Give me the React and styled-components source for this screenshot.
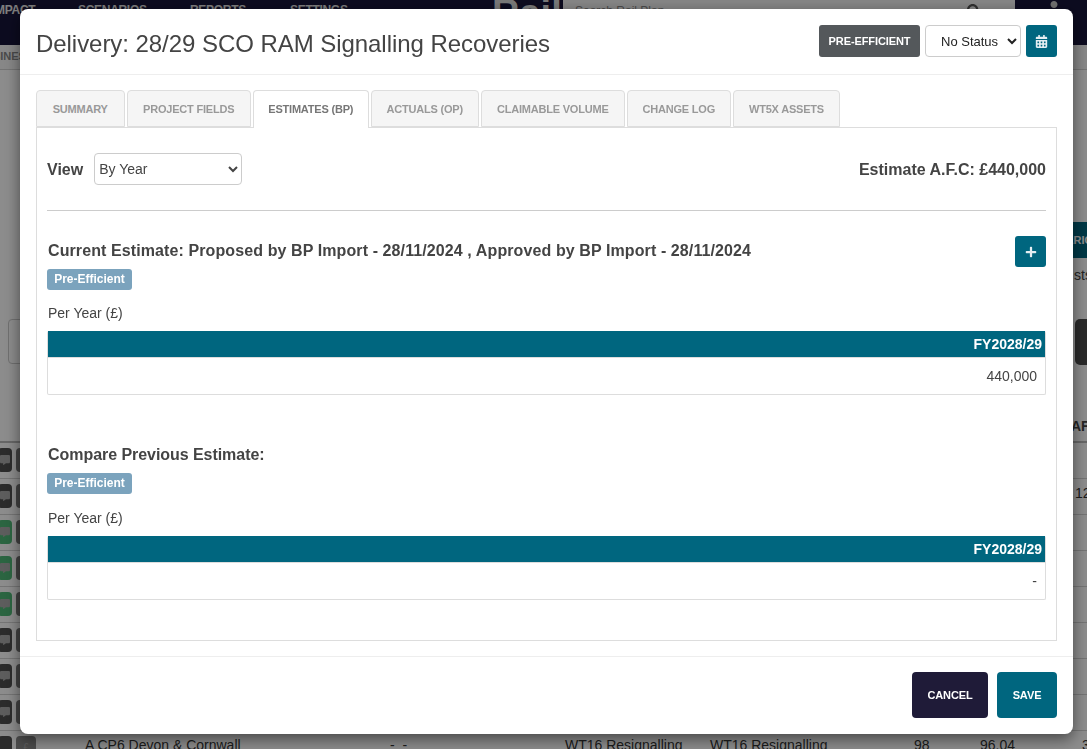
import React from 'react';

import styled, { createGlobalStyle } from 'styled-components';
import { FaCalendarAlt, FaCommentAlt, FaPlus, FaSearch, FaUser } from 'react-icons/fa';

const GlobalStyle = createGlobalStyle`
  html, body {
    margin: 0;
    padding: 0;
    background: #fff;
    font-family: "Liberation Sans", Arial, sans-serif;
    color: #444;
  }
  * { box-sizing: border-box; }
`;

const Page = styled.div`
  width: 1087px;
  height: 749px;
  overflow: hidden;
  background: #fff;
`;

const Nav = styled.div`
  height: 45px;
  background: #17153a;
  display: flex;
  align-items: flex-start;
  overflow: hidden;
`;

const NavLink = styled.span`
  width: ${(p) => p.$width}px;
  flex: none;
  margin-top: 3px;
  font-size: 12px;
  line-height: 14px;
  font-weight: 700;
  letter-spacing: -0.3px;
  color: #e4e4e4;
  white-space: nowrap;
`;

const NavLinks = styled.div`
  display: flex;
  width: 500px;
  flex: none;
  margin-left: -8px;
`;

const Logo = styled.span`
  width: 71px;
  flex: none;
  margin-top: -6px;
  font-size: 38px;
  line-height: 38px;
  font-weight: 700;
  color: #ddd;
  overflow: hidden;
`;

const SearchBar = styled.div`
  width: 452px;
  height: 45px;
  flex: none;
  background: #f4f4f4;
  display: flex;
  align-items: flex-start;
  justify-content: space-between;
  padding: 4px 34px 0 12px;
  font-size: 12px;
  color: #888;
`;

const NavEnd = styled.div`
  flex: 1;
  padding: 1px 0 0 32px;
  color: #ccc;
`;

const SubNav = styled.div`
  height: 25px;
  border-bottom: 1px solid #d2d2d2;
  background: #f6f6f6;
  padding-top: 4px;
  margin-left: -23px;
  font-size: 11px;
  line-height: 14px;
  font-weight: 700;
  color: #888;
`;

const Toolbar = styled.div`
  height: 372px;
  padding-top: 152px;
  position: relative;
`;

const ScenarioButton = styled.div`
  width: 120px;
  height: 36px;
  margin-left: 1000px;
  margin-right: -33px;
  padding-left: 35px;
  background: #00667f;
  border-radius: 3px;
  color: #fff;
  font-size: 11px;
  font-weight: 700;
  line-height: 36px;
`;

const ScenarioNote = styled.div`
  margin: 9px 0 0 1074px;
  font-size: 14px;
  line-height: 16px;
  color: #444;
`;

const ToolbarRow = styled.div`
  display: flex;
  justify-content: space-between;
  margin-top: 36px;
  padding: 0 0 0 8px;
`;

const FilterBox = styled.div`
  width: 200px;
  height: 45px;
  border: 1px solid #ccc;
  border-radius: 4px;
`;

const DarkButton = styled.div`
  width: 60px;
  height: 46px;
  margin-right: -48px;
  background: #4d4d4d;
  border-radius: 5px;
`;

const HeaderRow = styled.div`
  height: 32px;
  margin-top: -31px;
  border-bottom: 2px solid #bbb;
  padding: 6px 0 0 1071px;
  font-size: 14px;
  line-height: 18px;
  font-weight: 700;
  white-space: nowrap;
`;

const Row = styled.div`
  height: 36px;
  border-bottom: 1px solid #d4d4d4;
  display: grid;
  grid-template-columns: 85px 305px 175px 145px 204px 66px 95px 1fr;
  font-size: 14px;
  line-height: 20px;
  color: #333;
  white-space: nowrap;
`;

const Cell = styled.div`
  padding-top: 4px;
  padding-left: ${(p) => p.$indent || 0}px;
`;

const ActionCell = styled.div`
  display: flex;
  gap: 4px;
  padding-top: 5px;
  margin-left: -2px;
`;

const RowButton = styled.div`
  width: ${(p) => p.$width || 14}px;
  height: 24px;
  flex: none;
  border-radius: 4px;
  background: ${(p) => p.$bg};
  color: #aaa;
  display: flex;
  align-items: center;
  justify-content: center;
  font-size: 10px;
`;

const Overlay = styled.div`
  position: fixed;
  inset: 0;
  background: rgba(0, 0, 0, 0.45);
  padding: 9px 14px 15px 20px;
`;

const Modal = styled.div`
  height: 725px;
  background: #fff;
  border-radius: 8px;
  box-shadow: 0 5px 15px rgba(0, 0, 0, 0.5);
  display: flex;
  flex-direction: column;
`;

const ModalHeader = styled.div`
  display: flex;
  align-items: center;
  justify-content: space-between;
  padding: 16px 16px 17px;
  border-bottom: 1px solid #eee;
`;

const Title = styled.h1`
  margin: 0;
  padding-top: 6px;
  font-size: 24px;
  line-height: 26px;
  font-weight: 400;
  letter-spacing: -0.05px;
  color: #444;
`;

const HeaderActions = styled.div`
  display: flex;
  gap: 5px;
`;

const StatusTag = styled.div`
  width: 101px;
  height: 32px;
  background: #54585b;
  border-radius: 3px;
  color: #fff;
  font-size: 11px;
  font-weight: 700;
  letter-spacing: -0.1px;
  line-height: 32px;
  text-align: center;
`;

const Select = styled.select`
  height: 32px;
  width: ${(p) => p.$width}px;
  padding: 0 0 0 ${(p) => p.$pad}px;
  background: #fff;
  border: 1px solid #ccc;
  border-radius: 4px;
  font-family: "Liberation Sans", Arial, sans-serif;
  font-size: ${(p) => p.$size}px;
  color: ${(p) => p.$color};
`;

const IconButton = styled.button`
  width: 31px;
  height: ${(p) => p.$height}px;
  padding: 0;
  border: 0;
  border-radius: 3px;
  background: #00667f;
  color: #e4eef2;
  font-size: ${(p) => p.$size}px;
  display: flex;
  align-items: center;
  justify-content: center;
`;

const ModalBody = styled.div`
  flex: 1;
  padding: 15px 16px;
`;

const Tabs = styled.div`
  display: flex;
  gap: 2.5px;
  height: 38px;
`;

const Tab = styled.div`
  width: ${(p) => p.$width}px;
  flex: none;
  height: ${(p) => (p.$active ? 38 : 37)}px;
  border: 1px solid #ddd;
  border-bottom: ${(p) => (p.$active ? 0 : '1px solid #ddd')};
  border-radius: 4px 4px 0 0;
  background: ${(p) => (p.$active ? '#fff' : '#f5f5f5')};
  color: ${(p) => (p.$active ? '#777' : '#999')};
  font-size: 11px;
  font-weight: 700;
  letter-spacing: -0.2px;
  line-height: 36px;
  text-align: center;
  white-space: nowrap;
  position: relative;
  z-index: ${(p) => (p.$active ? 1 : 0)};
`;

const Panel = styled.div`
  height: 514px;
  margin-top: -1px;
  border: 1px solid #ddd;
  padding: 25px 10px 0;
`;

const ViewRow = styled.div`
  display: flex;
  align-items: center;
  justify-content: space-between;
  padding-bottom: 25px;
  border-bottom: 1px solid #ccc;
`;

const ViewControl = styled.div`
  display: flex;
  align-items: center;
  gap: 11px;
`;

const StrongText = styled.span`
  margin-top: 2px;
  font-size: 16px;
  line-height: 18px;
  font-weight: 700;
  color: #444;
`;

const EstimateHeading = styled.div`
  display: flex;
  justify-content: space-between;
  align-items: flex-start;
  margin-top: 25px;
  height: 33px;
`;

const HeadingText = styled.h2`
  margin: ${(p) => p.$top}px 0 0;
  padding-left: 1px;
  font-size: 16px;
  line-height: 18px;
  font-weight: 700;
  letter-spacing: ${(p) => p.$spacing}px;
  color: #444;
`;

const Badge = styled.div`
  width: 85px;
  height: 21px;
  margin-top: ${(p) => p.$top}px;
  border-radius: 3px;
  background: #7ba3bd;
  color: #fff;
  font-size: 12px;
  font-weight: 700;
  line-height: 20px;
  text-align: center;
`;

const Caption = styled.div`
  margin-top: ${(p) => p.$top}px;
  padding-left: 1px;
  font-size: 14px;
  line-height: 16px;
  color: #444;
`;

const YearTable = styled.div`
  margin-top: ${(p) => p.$top}px;
  border: 1px solid #ddd;
  border-top: 0;
  border-radius: 2px;
`;

const YearHead = styled.div`
  height: 27px;
  padding-right: 3px;
  background: #00667f;
  border-bottom: 1px solid #ddd;
  color: #fff;
  font-size: 14px;
  font-weight: 700;
  line-height: 27px;
  text-align: right;
`;

const YearValue = styled.div`
  height: 36px;
  padding-right: 8px;
  font-size: 14px;
  line-height: 36px;
  text-align: right;
  color: #444;
`;

const ModalFooter = styled.div`
  display: flex;
  justify-content: flex-end;
  gap: 9px;
  padding: 15px 16px 16px;
  border-top: 1px solid #eee;
`;

const FooterButton = styled.button`
  width: ${(p) => p.$width}px;
  height: 46px;
  padding: 0;
  border: 0;
  border-radius: 4px;
  background: ${(p) => p.$bg};
  color: #fff;
  font-family: "Liberation Sans", Arial, sans-serif;
  font-size: 11px;
  font-weight: 700;
  letter-spacing: -0.1px;
`;

const tabs = [
  { label: 'SUMMARY', width: 88.5 },
  { label: 'PROJECT FIELDS', width: 123.5 },
  { label: 'ESTIMATES (BP)', width: 115.5, active: true },
  { label: 'ACTUALS (OP)', width: 107.5 },
  { label: 'CLAIMABLE VOLUME', width: 143.5 },
  { label: 'CHANGE LOG', width: 103.5 },
  { label: 'WT5X ASSETS', width: 107 },
];

const navLinks = [
  { label: 'IMPACT', width: 86 },
  { label: 'SCENARIOS', width: 112 },
  { label: 'REPORTS', width: 100 },
  { label: 'SETTINGS', width: 100 },
];

const bgRows = [
  { tone: '#4f4f4f' },
  { tone: '#4f4f4f', end: '12' },
  { tone: '#4fb877' },
  { tone: '#4fb877' },
  { tone: '#4fb877' },
  { tone: '#4f4f4f' },
  { tone: '#4f4f4f' },
  { tone: '#4f4f4f' },
];

const App = () => (
  <Page>
    <GlobalStyle />
    <Nav>
      <NavLinks>
        {navLinks.map((link) => (
          <NavLink key={link.label} $width={link.width}>{link.label}</NavLink>
        ))}
      </NavLinks>
      <Logo>Rail</Logo>
      <SearchBar>
        <span>Search Rail Plan</span>
        <FaSearch size={14} color="#555" />
      </SearchBar>
      <NavEnd><FaUser size={14} /></NavEnd>
    </Nav>
    <SubNav>BUSINESS</SubNav>
    <Toolbar>
      <ScenarioButton>SCENARIO</ScenarioButton>
      <ScenarioNote>sts</ScenarioNote>
      <ToolbarRow>
        <FilterBox />
        <DarkButton />
      </ToolbarRow>
    </Toolbar>
    <HeaderRow>AFC</HeaderRow>
    {bgRows.map((row, i) => (
      <Row key={i}>
        <ActionCell>
          <RowButton $bg={row.tone}><FaCommentAlt /></RowButton>
          <RowButton $bg="#777" $width={20} />
        </ActionCell>
        <Cell /><Cell /><Cell /><Cell /><Cell /><Cell />
        <Cell>{row.end}</Cell>
      </Row>
    ))}
    <Row>
      <ActionCell>
        <RowButton $bg="#4f4f4f" />
        <RowButton $bg="#888" $width={20}>£</RowButton>
      </ActionCell>
      <Cell>A CP6 Devon &amp; Cornwall</Cell>
      <Cell>- &nbsp;-</Cell>
      <Cell>WT16 Resignalling</Cell>
      <Cell>WT16 Resignalling</Cell>
      <Cell>98</Cell>
      <Cell>96.04</Cell>
      <Cell $indent={7}>3</Cell>
    </Row>

    <Overlay>
      <Modal>
        <ModalHeader>
          <Title>Delivery: 28/29 SCO RAM Signalling Recoveries</Title>
          <HeaderActions>
            <StatusTag>PRE-EFFICIENT</StatusTag>
            <Select $width={96} $pad={11} $size={13} $color="#222" defaultValue="none">
              <option value="none">No Status</option>
            </Select>
            <IconButton $height={32} $size={13}><FaCalendarAlt /></IconButton>
          </HeaderActions>
        </ModalHeader>

        <ModalBody>
          <Tabs>
            {tabs.map((tab) => (
              <Tab key={tab.label} $width={tab.width} $active={tab.active}>{tab.label}</Tab>
            ))}
          </Tabs>
          <Panel>
            <ViewRow>
              <ViewControl>
                <StrongText>View</StrongText>
                <Select $width={148} $pad={0} $size={14} $color="#444" defaultValue="year">
                  <option value="year">By Year</option>
                </Select>
              </ViewControl>
              <StrongText>Estimate A.F.C: £440,000</StrongText>
            </ViewRow>

            <EstimateHeading>
              <HeadingText $top={6} $spacing={0.1}>Current Estimate: Proposed by BP Import - 28/11/2024 , Approved by BP Import - 28/11/2024</HeadingText>
              <IconButton $height={31} $size={12}><FaPlus /></IconButton>
            </EstimateHeading>
            <Badge $top={0}>Pre-Efficient</Badge>
            <Caption $top={15}>Per Year (£)</Caption>
            <YearTable $top={10}>
              <YearHead>FY2028/29</YearHead>
              <YearValue>440,000</YearValue>
            </YearTable>

            <HeadingText $top={51} $spacing={-0.05}>Compare Previous Estimate:</HeadingText>
            <Badge $top={9}>Pre-Efficient</Badge>
            <Caption $top={16}>Per Year (£)</Caption>
            <YearTable $top={10}>
              <YearHead>FY2028/29</YearHead>
              <YearValue>-</YearValue>
            </YearTable>
          </Panel>
        </ModalBody>

        <ModalFooter>
          <FooterButton $width={76} $bg="#1f1b38">CANCEL</FooterButton>
          <FooterButton $width={60} $bg="#00667f">SAVE</FooterButton>
        </ModalFooter>
      </Modal>
    </Overlay>
  </Page>
);

export default App;
